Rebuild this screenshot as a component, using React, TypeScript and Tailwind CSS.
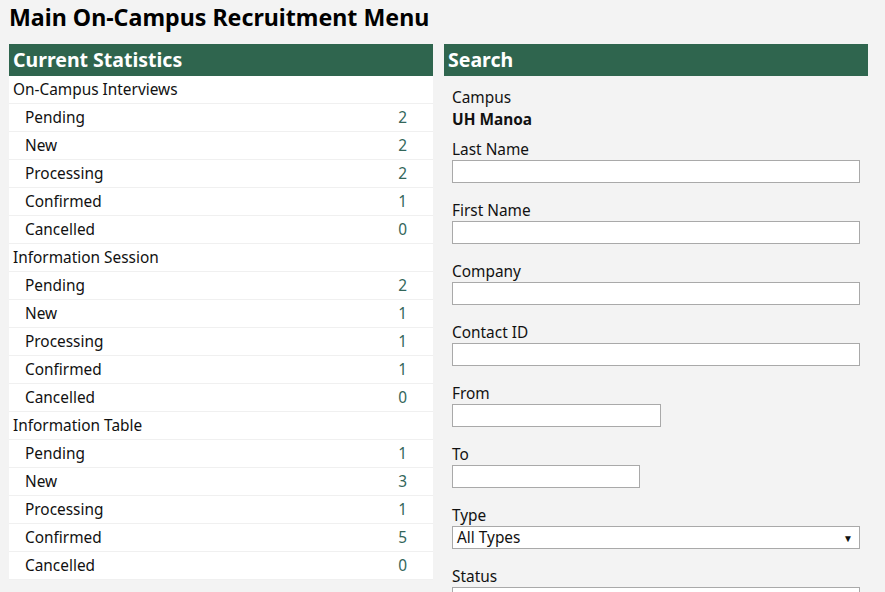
const stats = [
  {
    title: "On-Campus Interviews",
    rows: [
      ["Pending", 2],
      ["New", 2],
      ["Processing", 2],
      ["Confirmed", 1],
      ["Cancelled", 0],
    ],
  },
  {
    title: "Information Session",
    rows: [
      ["Pending", 2],
      ["New", 1],
      ["Processing", 1],
      ["Confirmed", 1],
      ["Cancelled", 0],
    ],
  },
  {
    title: "Information Table",
    rows: [
      ["Pending", 1],
      ["New", 3],
      ["Processing", 1],
      ["Confirmed", 5],
      ["Cancelled", 0],
    ],
  },
] as const;

const Field = ({ label, width }: { label: string; width: string }) => (
  <div className="mb-[17px]">
    <div className="h-[21px] leading-[21px]">{label}</div>
    <input
      type="text"
      className={`${width} h-[23px] border border-[#a9a9a9] bg-white block`}
    />
  </div>
);

const Select = ({ value }: { value: string }) => (
  <div className="w-[408px] h-[23px] border border-[#a9a9a9] bg-white flex items-center justify-between pl-[4px] pr-[6px]">
    <span className="leading-[21px]">{value}</span>
    <span className="text-[10px] leading-none">▼</span>
  </div>
);

const App = () => {
  return (
    <div
      className="min-h-screen bg-[#f3f3f3] text-[#111] text-[15.4px] px-[9px] h-[592px] overflow-hidden"
      style={{ fontFamily: '"Noto Sans", "Open Sans", sans-serif' }}
    >
      {/* HEADER */}
      <h1 className="text-[23.2px] font-bold leading-[30px] pt-[2px] mb-[12px] text-black">
        Main On-Campus Recruitment Menu
      </h1>

      <div className="flex gap-[11px] items-start">
        {/* STATISTICS */}
        <div className="w-[424px] bg-white">
          <div className="h-[32px] bg-[#2f654e] text-white font-bold text-[19.5px] leading-[32px] px-[4px]">
            Current Statistics
          </div>
          {stats.map((g) => (
            <div key={g.title}>
              <div className="h-[28px] border-b border-[#f0f0f0] leading-[27px] px-[4px]">
                {g.title}
              </div>
              {g.rows.map(([name, n]) => (
                <div
                  key={name}
                  className="h-[28px] border-b border-[#f0f0f0] leading-[27px] pl-[16px] pr-[26px] flex justify-between"
                >
                  <span>{name}</span>
                  <span className="text-[#33665a]">{n}</span>
                </div>
              ))}
            </div>
          ))}
        </div>

        {/* SEARCH */}
        <div className="w-[424px]">
          <div className="h-[32px] bg-[#2f654e] text-white font-bold text-[19.5px] leading-[32px] px-[4px]">
            Search
          </div>
          <div className="px-[8px] pt-[11px]">
            <div className="leading-[22px]">Campus</div>
            <div className="leading-[22px] font-bold mb-[8px]">UH Manoa</div>
            <Field label="Last Name" width="w-[408px]" />
            <Field label="First Name" width="w-[408px]" />
            <Field label="Company" width="w-[408px]" />
            <Field label="Contact ID" width="w-[408px]" />
            <Field label="From" width="w-[209px]" />
            <Field label="To" width="w-[188px]" />
            <div className="mb-[17px]">
              <div className="h-[21px] leading-[21px]">Type</div>
              <Select value="All Types" />
            </div>
            <div>
              <div className="h-[21px] leading-[21px]">Status</div>
              <Select value="All" />
            </div>
          </div>
        </div>
      </div>
    </div>
  );
};

export default App;
